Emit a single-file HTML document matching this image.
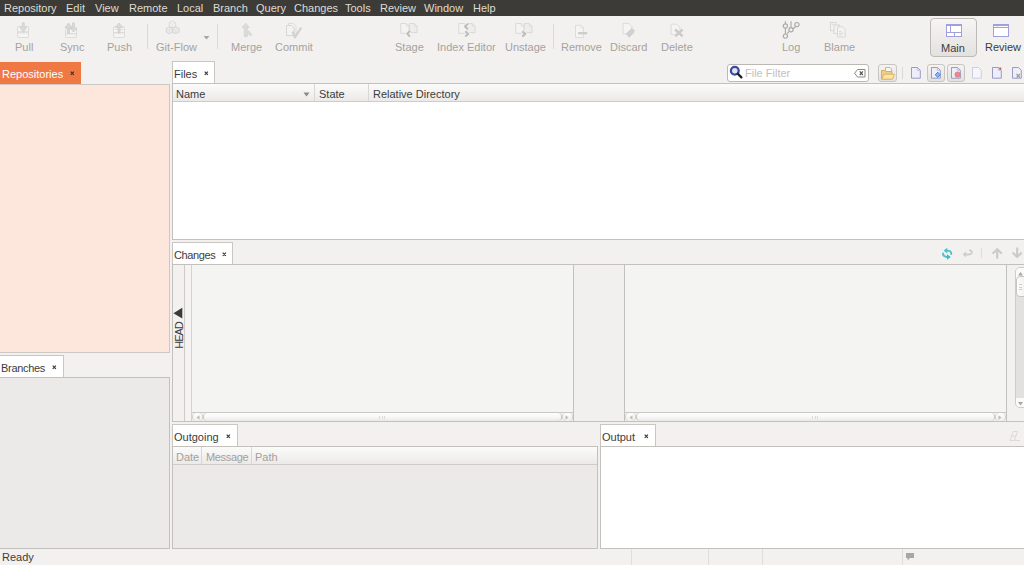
<!DOCTYPE html>
<html><head><meta charset="utf-8">
<style>
*{box-sizing:border-box;margin:0;padding:0}
html,body{width:1024px;height:565px;overflow:hidden;background:#f2f1f0;font-family:"Liberation Sans",sans-serif;font-size:11px;line-height:13px;color:#3c3c3c;position:relative}
div,span,svg{position:absolute}
svg{overflow:visible}
#menu{left:0;top:0;width:1024px;height:16px;background:#3c3b37;color:#dfdbd2}
#menu span{top:2px;white-space:nowrap}
.tb{top:41px;color:#a6a29e;white-space:nowrap}
.sep{width:1px;background:#dcdad6}
.tab{background:#fff;border:1px solid #cac7c2;border-bottom:none;white-space:nowrap}
.tab .t{left:1px;top:6px;color:#3c3c3c}
.panel{border:1px solid #c4c1bc}
.hdr{height:18px;background:linear-gradient(#fbfbfa,#ebeae8);border-bottom:1px solid #cfccc7}
.hdr span{top:4px;white-space:nowrap}
.hs{width:1px;top:0;height:17px;background:#d9d7d3}
.hsb{height:9px;background:#f4f4f3;border-top:1px solid #cbc8c3;overflow:hidden}
.hsb .cap{top:0;height:8px;background:linear-gradient(#fefefe,#efeeec);border:1px solid #d3d0cc;border-top:none;border-bottom:none;border-radius:4px}
.hsb .thumb{top:0;height:8px;background:linear-gradient(#fefefe,#f8f8f7 50%,#e9e8e6);border-left:1px solid #c8c5c0;border-right:1px solid #c8c5c0;border-radius:4px}
.vsb{background:#e2e1df;border:1px solid #cfccc8;border-radius:5px;overflow:hidden}
.vsb .vcap{left:0;width:12px;background:#fafafa}
.vsb .vthumb{left:0;width:12px;background:linear-gradient(90deg,#fdfdfd,#eeedeb);border:1px solid #c8c5c0;border-radius:4px}
.grip{width:6px;height:3px;border-left:1px solid #dcdad7;border-right:1px solid #dcdad7;background:linear-gradient(90deg,transparent 2px,#dcdad7 2px,#dcdad7 3px,transparent 3px)}
.vgrip{width:3px;height:6px;border-top:1px solid #d0cecb;border-bottom:1px solid #d0cecb;background:linear-gradient(transparent 2px,#d0cecb 2px,#d0cecb 3px,transparent 3px)}
</style></head><body>
<div id="menu">
<span style="left:4px">Repository</span>
<span style="left:66px">Edit</span>
<span style="left:95px">View</span>
<span style="left:129px">Remote</span>
<span style="left:177px">Local</span>
<span style="left:213px">Branch</span>
<span style="left:256px">Query</span>
<span style="left:294px">Changes</span>
<span style="left:345px">Tools</span>
<span style="left:380px">Review</span>
<span style="left:424px">Window</span>
<span style="left:473px">Help</span>
</div>

<!-- toolbar labels -->
<div class="tb" style="left:15px">Pull</div>
<div class="tb" style="left:60px">Sync</div>
<div class="tb" style="left:107px">Push</div>
<div class="tb" style="left:156px">Git-Flow</div>
<div class="tb" style="left:231px">Merge</div>
<div class="tb" style="left:275px">Commit</div>
<div class="tb" style="left:395px">Stage</div>
<div class="tb" style="left:437px">Index Editor</div>
<div class="tb" style="left:505px">Unstage</div>
<div class="tb" style="left:561px">Remove</div>
<div class="tb" style="left:610px">Discard</div>
<div class="tb" style="left:661px">Delete</div>
<div class="tb" style="left:782px">Log</div>
<div class="tb" style="left:824px">Blame</div>

<div class="sep" style="left:147px;top:24px;height:25px"></div>
<div class="sep" style="left:217px;top:24px;height:25px"></div>
<div class="sep" style="left:553px;top:24px;height:25px"></div>

<!-- toolbar icons -->
<!-- Pull -->
<svg style="left:16px;top:22px" width="16" height="16" viewBox="0 0 16 16">
<rect x="1.5" y="4.5" width="11" height="11" rx="1.5" fill="#f5f5f4" stroke="#dddcda"/>
<rect x="2" y="9" width="10" height="2.5" fill="#e2e1df"/>
<path d="M6.2 0.8h2.1v4.6h2.3L7.25 10.7 3.9 5.4h2.3z" fill="#d8ded7" stroke="#cdd0cc" stroke-width="0.7" stroke-linejoin="round"/>
</svg>
<!-- Sync -->
<svg style="left:64px;top:22px" width="16" height="16" viewBox="0 0 16 16">
<rect x="1.5" y="6.5" width="11" height="9" rx="1.5" fill="#f4f4f3" stroke="#dddcda"/>
<rect x="2" y="11" width="10" height="1.5" fill="#dedddb"/>
<path d="M3.5 11V5.5H1L4.5 1 8 5.5H5.5V11z" fill="#dcd8d6" stroke="#d0cdcb" stroke-width="0.8"/>
<path d="M8.5 1h2v5h2.5l-3.5 4-3.5-4h2.5z" fill="#d6dcd5" stroke="#cbcfca" stroke-width="0.8"/>
</svg>
<!-- Push -->
<svg style="left:112px;top:22px" width="16" height="16" viewBox="0 0 16 16">
<rect x="1.5" y="4.5" width="11" height="11" rx="1.5" fill="#f4f4f3" stroke="#dddcda"/>
<rect x="2" y="10" width="10" height="1.5" fill="#dedddb"/>
<rect x="2" y="7" width="10" height="1" fill="#e4e3e1"/>
<path d="M6 11V5.5H3.5L7 1l3.5 4.5H8V11z" fill="#dcd8d6" stroke="#d0cdcb" stroke-width="0.8"/>
</svg>
<!-- Git-Flow -->
<svg style="left:166px;top:20px" width="16" height="16" viewBox="0 0 16 16">
<path d="M6.45 0.90 L9.65 2.50 L9.65 6.30 L6.45 7.90 L3.25 6.30 L3.25 2.50z" fill="#f2f2f1" stroke="#d6d6d4" stroke-width="0.9"/>
<path d="M3.25 2.50L6.45 4.10L9.65 2.50M6.45 4.10L6.45 7.90" fill="none" stroke="#dfdfdd" stroke-width="0.7"/>
<path d="M3.50 6.80 L6.70 8.40 L6.70 12.20 L3.50 13.80 L0.30 12.20 L0.30 8.40z" fill="#eaebed" stroke="#d3d3d1" stroke-width="0.9"/>
<path d="M0.30 8.40L3.50 10.00L6.70 8.40M3.50 10.00L3.50 13.80" fill="none" stroke="#dcdcda" stroke-width="0.7"/>
<path d="M9.90 6.70 L13.10 8.30 L13.10 12.10 L9.90 13.70 L6.70 12.10 L6.70 8.30z" fill="#edebea" stroke="#d3d3d1" stroke-width="0.9"/>
<path d="M6.70 8.30L9.90 9.90L13.10 8.30M9.90 9.90L9.90 13.70" fill="none" stroke="#dcdcda" stroke-width="0.7"/>
</svg>
<svg style="left:203px;top:36px" width="7" height="4" viewBox="0 0 7 4"><path d="M0.5 0h6L3.5 3.5z" fill="#a9a7a4"/></svg>
<!-- Merge -->
<svg style="left:240px;top:22px" width="16" height="16" viewBox="0 0 16 16">
<g fill="#d9dcd9" stroke="#cfd1cf" stroke-width="0.7" stroke-linejoin="round">
<path d="M5.7 1.2L9.3 5.6H7.3v2.2l4.6 4.6-1.5 1.5-3.1-3.1v3.8H4.3V5.6H2.1z"/>
</g>
</svg>
<!-- Commit -->
<svg style="left:285px;top:22px" width="18" height="17" viewBox="0 0 18 17">
<path d="M3.5 1.5h5l2.5 2.5v8h-7.5z" fill="#f1f1f0" stroke="#dbdad8" stroke-width="0.9"/>
<path d="M1.5 3.5h5l2.5 2.5v7.5h-7.5z" fill="#f3f3f2" stroke="#d3d2d0" stroke-width="0.9"/>
<path d="M7.6 9.7L9.9 15.3 16.2 5.7" fill="none" stroke="#d2d1cf" stroke-width="2.2" stroke-linejoin="round"/>
</svg>
<!-- Stage -->
<svg style="left:400px;top:22px" width="18" height="16" viewBox="0 0 18 16">
<path d="M0.8 1.5h5.5l2.8 2.8v7h-8.3z" fill="#f3f3f2" stroke="#d8d7d5" stroke-width="0.9"/>
<path d="M9.3 1.5h5l2.8 2.8v6.3h-7.8z" fill="#eeedec" stroke="#d8d7d5" stroke-width="0.9"/>
<path d="M6.3 1.5v2.8h2.8M14.3 1.5v2.8h2.8" fill="none" stroke="#dcdbd9" stroke-width="0.7"/>
<path d="M10 8.8L7.3 11.7 10 14.6" fill="none" stroke="#f4f4f3" stroke-width="3.6" stroke-linejoin="round"/>
<path d="M10 8.8L7.3 11.7 10 14.6" fill="none" stroke="#bdbdbb" stroke-width="2.1" stroke-linejoin="round"/>
</svg>
<!-- Index Editor -->
<svg style="left:458px;top:22px" width="18" height="16" viewBox="0 0 18 16">
<path d="M0.8 1.5h5.5l2.8 2.8v7h-8.3z" fill="#f3f3f2" stroke="#d8d7d5" stroke-width="0.9"/>
<path d="M9.3 1.5h5l2.8 2.8v6.3h-7.8z" fill="#eeedec" stroke="#d8d7d5" stroke-width="0.9"/>
<path d="M6.3 1.5v2.8h2.8M14.3 1.5v2.8h2.8" fill="none" stroke="#dcdbd9" stroke-width="0.7"/>
<path d="M10 1.8L7 4.6 10 7.3M7.3 9.2L10.2 11.9 7.3 14.6" fill="none" stroke="#f4f4f3" stroke-width="3.6" stroke-linejoin="round"/>
<path d="M10 1.8L7 4.6 10 7.3M7.3 9.2L10.2 11.9 7.3 14.6" fill="none" stroke="#bdbdbb" stroke-width="2.1" stroke-linejoin="round"/>
</svg>
<!-- Unstage -->
<svg style="left:515px;top:22px" width="18" height="16" viewBox="0 0 18 16">
<path d="M0.8 1.5h5.5l2.8 2.8v7h-8.3z" fill="#f3f3f2" stroke="#d8d7d5" stroke-width="0.9"/>
<path d="M9.3 1.5h5l2.8 2.8v6.3h-7.8z" fill="#eeedec" stroke="#d8d7d5" stroke-width="0.9"/>
<path d="M6.3 1.5v2.8h2.8M14.3 1.5v2.8h2.8" fill="none" stroke="#dcdbd9" stroke-width="0.7"/>
<path d="M7.3 9.2L10.3 11.9 7.3 14.6" fill="none" stroke="#f4f4f3" stroke-width="3.6" stroke-linejoin="round"/>
<path d="M7.3 9.2L10.3 11.9 7.3 14.6" fill="none" stroke="#bdbdbb" stroke-width="2.1" stroke-linejoin="round"/>
</svg>
<!-- Remove -->
<svg style="left:574px;top:22px" width="16" height="16" viewBox="0 0 16 16">
<path d="M1.5 3.3h5.5l2.4 2.4v9.9h-7.9z" fill="#f4f4f3" stroke="#dad9d7" stroke-width="0.9"/>
<path d="M7 3.3v2.4h2.4" fill="none" stroke="#dddcda" stroke-width="0.7"/>
<rect x="4.1" y="10" width="9.1" height="2.4" fill="#cfcdcb"/>
</svg>
<!-- Discard -->
<svg style="left:622px;top:22px" width="16" height="16" viewBox="0 0 16 16">
<path d="M1.1 1.4h5.8l2.9 2.9v7.5h-8.7z" fill="#f4f4f3" stroke="#dad9d7" stroke-width="0.9"/>
<path d="M4.1 11.8l3.2 3.5 5.7-6-2.9-3.2z" fill="#d0d0ce" stroke="#c8c8c6" stroke-width="0.6"/>
<path d="M10.4 7.2a2 2 0 1 1 1.5 2.6" fill="none" stroke="#f2f2f1" stroke-width="0.9"/>
</svg>
<!-- Delete -->
<svg style="left:670px;top:22px" width="16" height="16" viewBox="0 0 16 16">
<path d="M1.1 2.2h5.8l2.9 2.9v7.4h-8.7z" fill="#f4f4f3" stroke="#dad9d7" stroke-width="0.9"/>
<path d="M5.1 7.5l7.5 6.8M12.6 7.5l-7.5 6.8" stroke="#f3f3f2" stroke-width="4"/>
<path d="M5.1 7.5l7.5 6.8M12.6 7.5l-7.5 6.8" stroke="#cdcac8" stroke-width="2.5"/>
</svg>
<!-- Log -->
<svg style="left:781px;top:20px" width="20" height="20" viewBox="0 0 20 20">
<g fill="none" stroke="#abaaa8" stroke-width="1.15">
<path d="M4.4 1.3v2.5M4.4 8v6M10 1.3v6.3M8.4 11.3L6 13.7M14.7 6.5L12.1 8.7"/>
<circle cx="4.4" cy="5.9" r="2.1"/><circle cx="10" cy="9.7" r="2.1"/><circle cx="15.9" cy="4.6" r="2.1"/><circle cx="4.4" cy="16.1" r="2.1"/>
</g>
</svg>
<!-- Blame -->
<svg style="left:829px;top:22px" width="18" height="16" viewBox="0 0 18 16">
<rect x="1.5" y="0.5" width="5.4" height="8.3" fill="#f3f3f2" stroke="#d5d4d2" stroke-width="0.9"/>
<rect x="5" y="3" width="5.3" height="8.6" fill="#f3f3f2" stroke="#d5d4d2" stroke-width="0.9"/>
<path d="M8.5 4.8h5.2l2.5 2.5v7.7h-7.7z" fill="#f3f3f2" stroke="#d5d4d2" stroke-width="0.9"/>
<path d="M10 9.3h2.5M10 11.3h4.5M10 13h3M2.8 2.3h1.5" stroke="#d0cfcd" stroke-width="0.8"/>
</svg>

<!-- Main / Review -->
<div style="left:930px;top:18px;width:47px;height:39px;border:1px solid #bdbab5;border-radius:4px;background:linear-gradient(#f6f5f4,#e4e2df)"></div>
<svg style="left:946px;top:24px" width="16" height="13" viewBox="0 0 16 13" shape-rendering="crispEdges">
<rect x="0" y="0" width="16" height="13" fill="#fff"/>
<g fill="#a0a0dd"><rect x="0" y="0" width="16" height="2"/><rect x="0" y="12" width="16" height="1"/><rect x="0" y="0" width="1" height="13"/><rect x="15" y="0" width="1" height="13"/><rect x="4" y="0" width="1" height="8"/><rect x="0" y="8" width="16" height="1"/><rect x="8" y="8" width="1" height="5"/></g>
</svg>
<div class="tb" style="left:941px;top:42px;color:#3c3c3c">Main</div>
<svg style="left:993px;top:24px" width="16" height="13" viewBox="0 0 16 13" shape-rendering="crispEdges">
<rect x="0" y="0" width="16" height="13" fill="#fff"/>
<g fill="#a0a0dd"><rect x="0" y="0" width="16" height="2"/><rect x="0" y="12" width="16" height="1"/><rect x="0" y="0" width="1" height="13"/><rect x="15" y="0" width="1" height="13"/><rect x="0" y="3" width="16" height="1"/></g>
<rect x="4" y="2" width="1" height="1" fill="#d4d4f0"/>
</svg>
<div class="tb" style="left:985px;top:41px;color:#3c3c3c">Review</div>

<!-- File filter -->
<div style="left:727px;top:64px;width:142px;height:18px;background:#fff;border:1px solid #bcb9b4;border-radius:3px"></div>
<svg style="left:729px;top:65px" width="14" height="14" viewBox="0 0 14 14">
<circle cx="5.8" cy="5.8" r="3.9" fill="#dfe5f5" stroke="#3a4c9c" stroke-width="2.3"/>
<path d="M8.8 8.8l3.6 3.6" stroke="#1e1e1e" stroke-width="2.3" stroke-linecap="round"/>
</svg>
<div style="left:745px;top:67px;color:#c4c0bc">File Filter</div>
<svg style="left:854px;top:69px" width="12" height="9" viewBox="0 0 12 9">
<path d="M3.5 0.5H11v7.5H3.5L0.6 4.25z" fill="#fff" stroke="#8a8986" stroke-width="1"/>
<path d="M5.8 2.4l3 3.6M8.8 2.4l-3 3.6" stroke="#555" stroke-width="1.2"/>
</svg>

<!-- right icon bar -->
<div style="left:878px;top:64px;width:19px;height:18px;border:1px solid #c9c6c1;border-radius:3px;background:linear-gradient(#f4f3f1,#e4e2df)"></div>
<svg style="left:881px;top:67px" width="14" height="13" viewBox="0 0 14 13">
<path d="M4.5 0.5h4.5l1.5 1.5v5h-6z" fill="#f6f6f6" stroke="#aaa9a6" stroke-width="0.8"/>
<path d="M0.5 3.5h3.5l1 1h6v7.5h-10.5z" fill="#f1cf7e" stroke="#d0a858" stroke-width="0.9"/>
<path d="M0.8 12.2l2-5h10.7l-2 5z" fill="#fae4a8" stroke="#d6b064" stroke-width="0.9"/>
</svg>
<div class="sep" style="left:902px;top:67px;height:12px;background:#dad8d4"></div>
<svg style="left:911px;top:67px" width="10" height="12" viewBox="0 0 10 12">
<path d="M0.5 0.5h6l2.8 2.8v7.9h-8.8z" fill="#eeeef9" stroke="#9090c0" stroke-width="0.9"/>
<path d="M6.3 0.6v2.8h2.8" fill="none" stroke="#b0b0d8" stroke-width="0.7"/>
</svg>
<div style="left:927px;top:64px;width:18px;height:18px;border:1px solid #c9c6c1;border-radius:3px;background:linear-gradient(#f4f3f1,#e4e2df)"></div>
<svg style="left:931px;top:67px" width="11" height="12" viewBox="0 0 11 12">
<path d="M0.5 0.5h6l2.8 2.8v7.9h-8.8z" fill="#eeeef9" stroke="#9090c0" stroke-width="0.9"/>
<path d="M6.3 0.6v2.8h2.8" fill="none" stroke="#b0b0d8" stroke-width="0.7"/>
<path d="M6.8 5.2l2.6 2.6-2.6 2.6-2.6-2.6z" fill="#8ab8f0" stroke="#3a78d8" stroke-width="0.9"/>
</svg>
<div style="left:947px;top:64px;width:18px;height:18px;border:1px solid #c9c6c1;border-radius:3px;background:linear-gradient(#f4f3f1,#e4e2df)"></div>
<svg style="left:951px;top:67px" width="11" height="12" viewBox="0 0 11 12">
<path d="M0.5 0.5h6l2.8 2.8v7.9h-8.8z" fill="#eeeef9" stroke="#9090c0" stroke-width="0.9"/>
<path d="M6.3 0.6v2.8h2.8" fill="none" stroke="#b0b0d8" stroke-width="0.7"/>
<circle cx="6.6" cy="7.6" r="2.7" fill="#ea8a8c" stroke="#d8686c" stroke-width="0.6"/>
</svg>
<svg style="left:972px;top:67px" width="10" height="12" viewBox="0 0 10 12">
<path d="M0.5 0.5h6l2.8 2.8v7.9h-8.8z" fill="#f5f5fb" stroke="#c8c8e0" stroke-width="0.9"/>
</svg>
<svg style="left:992px;top:67px" width="10" height="12" viewBox="0 0 10 12">
<path d="M0.5 0.5h6l2.8 2.8v7.9h-8.8z" fill="#eeeef9" stroke="#9090c0" stroke-width="0.9"/>
<path d="M6.3 0.6v2.8h2.8" fill="none" stroke="#b0b0d8" stroke-width="0.7"/>
<circle cx="8.2" cy="1.6" r="1.2" fill="#e05050"/>
</svg>
<svg style="left:1012px;top:67px" width="12" height="12" viewBox="0 0 12 12">
<path d="M0.5 0.5h6l2.8 2.8v7.9h-8.8z" fill="#eeeef9" stroke="#9090c0" stroke-width="0.9"/>
<path d="M4.5 7l3.5 3.5M8 7l-3.5 3.5" stroke="#999" stroke-width="1.1"/>
</svg>

<!-- Repositories -->
<div style="left:0;top:62px;width:81px;height:22px;background:#f07842"></div>
<div style="left:2px;top:68px;color:#fff;white-space:nowrap">Repositories</div>
<svg style="left:70px;top:71px" width="5" height="5" viewBox="0 0 5 5"><path d="M0.7 0.7l3.2 3.2M3.9 0.7l-3.2 3.2" stroke="#333" stroke-width="1.1"/></svg>
<div style="left:0;top:84px;width:170px;height:269px;background:#fde6dc;border:1px solid #cdc8c3;border-left:none"></div>

<!-- Branches -->
<div class="tab" style="left:-1px;top:355px;width:65px;height:23px"><span class="t" style="left:1px;top:5.5px;letter-spacing:-0.3px">Branches</span></div>
<svg style="left:52px;top:365px" width="5" height="5" viewBox="0 0 5 5"><path d="M0.7 0.7l3.2 3.2M3.9 0.7l-3.2 3.2" stroke="#333" stroke-width="1.1"/></svg>
<div style="left:0;top:377px;width:170px;height:172px;background:#ebeae8;border:1px solid #c4c1bc;border-left:none"></div>

<!-- Files -->
<div class="tab" style="left:172px;top:61px;width:43px;height:23px"><span class="t">Files</span></div>
<svg style="left:204px;top:71px" width="5" height="5" viewBox="0 0 5 5"><path d="M0.7 0.7l3.2 3.2M3.9 0.7l-3.2 3.2" stroke="#333" stroke-width="1.1"/></svg>
<div class="panel" style="left:172px;top:83px;width:862px;height:157px;background:#fff">
  <div class="hdr" style="left:0;top:0;width:861px">
    <span style="left:3px">Name</span>
    <svg style="left:130px;top:8px" width="7" height="5" viewBox="0 0 7 5"><path d="M0.5 0.5h6L3.5 4.5z" fill="#8a8986"/></svg>
    <div class="hs" style="left:141px"></div>
    <span style="left:146px">State</span>
    <div class="hs" style="left:195px"></div>
    <span style="left:200px">Relative Directory</span>
  </div>
</div>

<!-- Changes -->
<div class="tab" style="left:172px;top:242px;width:61px;height:23px"><span class="t" style="letter-spacing:-0.4px">Changes</span></div>
<svg style="left:222px;top:252px" width="5" height="5" viewBox="0 0 5 5"><path d="M0.7 0.7l3.2 3.2M3.9 0.7l-3.2 3.2" stroke="#333" stroke-width="1.1"/></svg>
<!-- changes toolbar icons -->
<svg style="left:942px;top:247px" width="11" height="13" viewBox="0 0 11 13">
<g fill="none" stroke="#52bfc6" stroke-width="1.9" stroke-linecap="round">
<path d="M4.6 3.6Q9.3 3.4 9.3 7"/>
<path d="M1 6.4Q1 9.8 5.2 10"/>
</g>
<path d="M1.6 3.6L5.3 0.8V6.4z" fill="#52bfc6"/>
<path d="M8.8 10L5 7.2V12.8z" fill="#4ab3ba"/>
</svg>
<svg style="left:962px;top:249px" width="11" height="9" viewBox="0 0 11 9">
<path d="M7.8 1.2Q10.2 2 9.8 3.8Q9.3 5.5 6.5 5.5H3.2" fill="none" stroke="#cfcecc" stroke-width="1.9" stroke-linecap="round"/>
<path d="M0.6 5.5L4 2.6V8.4z" fill="#cfcecc"/>
</svg>
<div class="sep" style="left:981px;top:248px;height:10px;background:#dfddda"></div>
<svg style="left:992px;top:248px" width="11" height="11" viewBox="0 0 11 11">
<path d="M5.2 9.8V1.5M1.3 5L5.2 1.2 9.1 5" fill="none" stroke="#cccbc9" stroke-width="2.2" stroke-linecap="round" stroke-linejoin="round"/>
</svg>
<svg style="left:1012px;top:248px" width="11" height="11" viewBox="0 0 11 11">
<path d="M5.2 0.3V8.6M1.3 5.2L5.2 9 9.1 5.2" fill="none" stroke="#cccbc9" stroke-width="2.2" stroke-linecap="round" stroke-linejoin="round"/>
</svg>

<div class="panel" style="left:172px;top:264px;width:862px;height:158px;background:#f2f1f0">
  <!-- left gutter -->
  <div style="left:0;top:0;width:12px;height:156px;background:#f2f1f0;border-right:1px solid #cfccc8"></div>
  <div style="left:13px;top:0;width:6px;height:156px;background:#f5f4f3;border-right:1px solid #d6d3cf"></div>
  <svg style="left:0px;top:42px" width="11" height="12" viewBox="0 0 11 12"><path d="M0.4 6.2L9.3 0.8v10.8z" fill="#3a3a3a"/></svg>
  <div style="left:-9px;top:64px;width:31px;height:13px;transform:rotate(-90deg);color:#3c3c3c;font-size:11px;line-height:13px;text-align:center;letter-spacing:-1px;white-space:nowrap">HEAD</div>
  <!-- left pane -->
  <div style="left:19px;top:0;width:382px;height:156px;background:#f4f4f3;border-right:1px solid #c4c1bc"></div>
  <div class="hsb" style="left:19px;top:147px;width:381px"><div class="cap" style="left:0;width:11px"></div><svg style="left:4px;top:1.5px" width="4" height="5" viewBox="0 0 4 5"><path d="M0.5 2.5L3.5 0.3v4.4z" fill="#bdbbb8"/></svg><div class="thumb" style="left:11px;width:359px"></div><div class="grip" style="left:187px;top:2.5px"></div><div class="cap" style="left:370px;width:11px"></div><svg style="left:373px;top:1.5px" width="4" height="5" viewBox="0 0 4 5"><path d="M3.5 2.5L0.5 0.3v4.4z" fill="#bdbbb8"/></svg></div>
  <!-- middle -->
  <div style="left:401px;top:0;width:51px;height:156px;background:#f1f0ef;border-right:1px solid #c4c1bc"></div>
  <!-- right pane -->
  <div style="left:452px;top:0;width:382px;height:156px;background:#f4f4f3;border-right:1px solid #c4c1bc"></div>
  <div class="hsb" style="left:452px;top:147px;width:381px"><div class="cap" style="left:0;width:11px"></div><svg style="left:4px;top:1.5px" width="4" height="5" viewBox="0 0 4 5"><path d="M0.5 2.5L3.5 0.3v4.4z" fill="#bdbbb8"/></svg><div class="thumb" style="left:11px;width:359px"></div><div class="grip" style="left:187px;top:2.5px"></div><div class="cap" style="left:370px;width:11px"></div><svg style="left:373px;top:1.5px" width="4" height="5" viewBox="0 0 4 5"><path d="M3.5 2.5L0.5 0.3v4.4z" fill="#bdbbb8"/></svg></div>
  <!-- vertical scrollbar -->
  <div class="vsb" style="left:842px;top:2px;width:14px;height:141px"><div class="vcap" style="top:0;height:11px"></div><svg style="left:1.5px;top:4px" width="5" height="4" viewBox="0 0 5 4"><path d="M2.5 0L5 3.5H0z" fill="#a8a6a3"/></svg><div class="vthumb" style="top:8px;height:21px"></div><div class="vgrip" style="left:3px;top:16px"></div><div class="vcap" style="top:130px;height:11px"></div><svg style="left:1.5px;top:134px" width="5" height="4" viewBox="0 0 5 4"><path d="M2.5 3.5L5 0H0z" fill="#a8a6a3"/></svg></div>
</div>

<!-- Outgoing -->
<div class="tab" style="left:172px;top:424px;width:66px;height:23px"><span class="t">Outgoing</span></div>
<svg style="left:226px;top:434px" width="5" height="5" viewBox="0 0 5 5"><path d="M0.7 0.7l3.2 3.2M3.9 0.7l-3.2 3.2" stroke="#333" stroke-width="1.1"/></svg>
<div class="panel" style="left:172px;top:446px;width:426px;height:103px;background:#ebeae8">
  <div class="hdr" style="left:0;top:0;width:424px;color:#a3a09c">
    <span style="left:3px">Date</span>
    <div class="hs" style="left:28px"></div>
    <span style="left:33px;letter-spacing:-0.35px">Message</span>
    <div class="hs" style="left:78px"></div>
    <span style="left:82px">Path</span>
  </div>
</div>

<!-- Output -->
<div class="tab" style="left:600px;top:424px;width:56px;height:23px"><span class="t">Output</span></div>
<svg style="left:644px;top:434px" width="5" height="5" viewBox="0 0 5 5"><path d="M0.7 0.7l3.2 3.2M3.9 0.7l-3.2 3.2" stroke="#333" stroke-width="1.1"/></svg>
<svg style="left:1009px;top:430px" width="12" height="12" viewBox="0 0 12 12">
<path d="M4 1.5h4.5L5.5 10.5H1z M3 6h4" fill="none" stroke="#d8d7d5" stroke-width="0.9"/>
<path d="M6 10.5h5" stroke="#dcdbd9"/>
</svg>
<div class="panel" style="left:600px;top:446px;width:434px;height:103px;background:#fff"></div>

<!-- status bar -->
<div style="left:2px;top:551px">Ready</div>
<div class="sep" style="left:631px;top:549px;height:16px;background:#e0deda"></div>
<div class="sep" style="left:708px;top:549px;height:16px;background:#e0deda"></div>
<div class="sep" style="left:762px;top:549px;height:16px;background:#e0deda"></div>
<div class="sep" style="left:902px;top:549px;height:16px;background:#e0deda"></div>
<svg style="left:905px;top:552px" width="10" height="10" viewBox="0 0 10 10">
<path d="M1 1h8v5H5L2.5 8.5V6H1z" fill="#a8a7a4"/>
</svg>
</body></html>
